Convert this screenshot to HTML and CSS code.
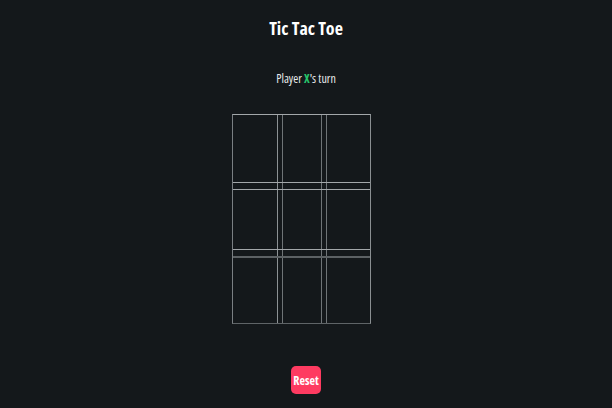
FILE: index.html
```html
<!DOCTYPE html>
<html lang="en">
<head>
<meta charset="utf-8">
<title>Tic Tac Toe</title>
<link rel="stylesheet" href="styles.css">
</head>
<body>
<main class="app">
  <h1 class="title">Tic Tac Toe</h1>
  <p class="status">Player <span class="player-x">X</span>'s turn</p>
  <div class="board">
    <div class="row r1">
      <div class="cell"></div><div class="cell"></div><div class="cell"></div>
    </div>
    <div class="row r2">
      <div class="cell"></div><div class="cell"></div><div class="cell"></div>
    </div>
    <div class="row r3">
      <div class="cell"></div><div class="cell"></div><div class="cell"></div>
    </div>
  </div>
  <button class="reset">Reset</button>
</main>
</body>
</html>
```

FILE: styles.css
```css
html, body {
  margin: 0;
  padding: 0;
  background: #14181b;
  height: 100%;
}
body {
  font-family: "Open Sans", "DejaVu Sans", sans-serif;
  font-stretch: 75%;
  color: #ffffff;
}
.app {
  display: flex;
  flex-direction: column;
  align-items: center;
}
.title {
  margin: 17px 0 0;
  font-size: 18px;
  line-height: 22px;
  font-weight: 700;
}
.status {
  margin: 32px 0 0;
  font-size: 12px;
  line-height: 16px;
  font-weight: 500;
  color: #e8eaeb;
}
.player-x {
  color: #27c46b;
  font-weight: 700;
}
.board {
  margin: 27px 10px 0 0;
  width: 137px;
  display: flex;
  flex-direction: column;
  gap: 6px;
  border: 1px solid #8a8f92;
  border-top-color: #a3a7aa;
  border-left-color: #7a7f83;
  border-bottom-color: #5f6467;
  background:
    linear-gradient(to right,
      transparent 44px, #8c9194 44px, #8c9194 45px, transparent 45px,
      transparent 49px, #6f7477 49px, #6f7477 50px, transparent 50px,
      transparent 88px, #6f7477 88px, #6f7477 89px, transparent 89px,
      transparent 93px, #6f7477 93px, #6f7477 94px, transparent 94px);
}
.row {
  display: grid;
  grid-template-columns: 44px 40px 44px;
  column-gap: 4px;
  border: 0 solid #a3a7aa;
}
.r1 { height: 67px; border-bottom-width: 1px; }
.r2 { height: 59px; border-top-width: 1px; border-bottom-width: 1px; }
.r3 { height: 65px; border-top: 2px solid #5c6164; }
.reset {
  margin-top: 42px;
  width: 30px;
  height: 28px;
  padding: 0;
  border: none;
  border-radius: 5px;
  background: #fe3b61;
  color: #ffffff;
  font-family: "Open Sans", "DejaVu Sans", sans-serif;
  font-stretch: 75%;
  font-size: 12px;
  font-weight: 700;
}
```
